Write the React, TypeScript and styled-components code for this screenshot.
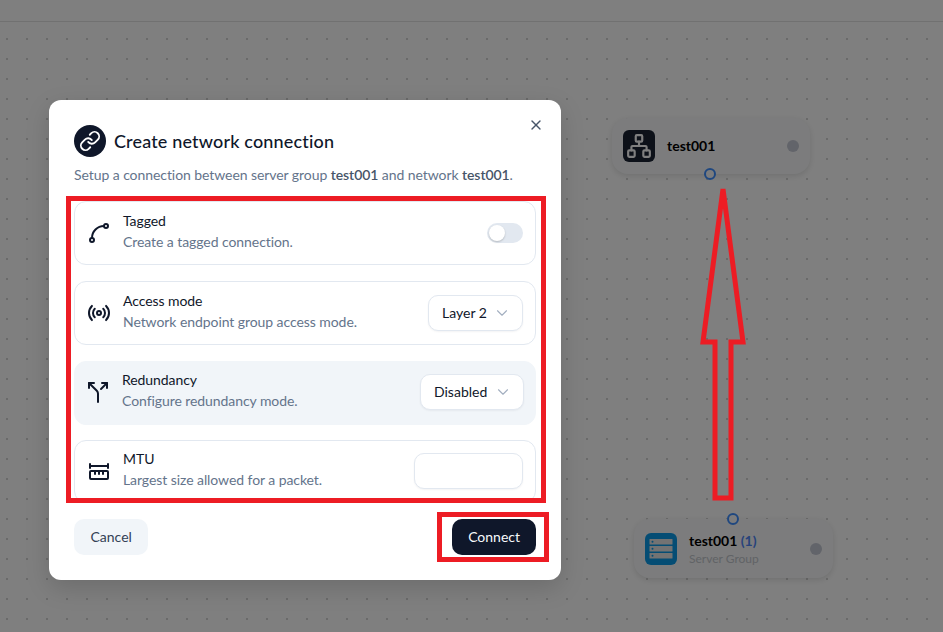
import React from "react";
import styled, { createGlobalStyle } from "styled-components";
import { ChevronDown, Link, Network, Radio, Split, Spline, X } from "lucide-react";

const GlobalStyle = createGlobalStyle`
    html, body {
        margin: 0;
        padding: 0;
        background: #fff;
    }
    * {
        box-sizing: border-box;
    }
`

const Page = styled.div`
    position: relative;
    width: 943px;
    height: 632px;
    overflow: hidden;
    font-family: "Lato", "Liberation Sans", sans-serif;
    color: #0f172a;
    background-color: #ffffff;
`
const TopBar = styled.div`
    height: 22px;
    background-color: #ffffff;
    border-bottom: 1px solid #e2e2e2;
`
const Canvas = styled.div`
    height: 610px;
    background-image: radial-gradient(circle, #d4d4d4 0.8px, transparent 1px);
    background-size: 20px 20px;
    background-position: -3px 7px;
`
const Node = styled.div<{ $x: number; $y: number; $w: number; $h: number }>`
    position: absolute;
    left: ${props => props.$x}px;
    top: ${props => props.$y}px;
    width: ${props => props.$w}px;
    height: ${props => props.$h}px;
    display: flex;
    align-items: center;
    gap: 12px;
    padding: 0 11px;
    background-color: #f8f9fa;
    border-radius: 16px;
    box-shadow: 0 2px 6px rgba(0, 0, 0, 0.12);
`
const NodeIcon = styled.div<{ $bg: string }>`
    width: 32px;
    height: 32px;
    flex: none;
    display: flex;
    align-items: center;
    justify-content: center;
    border-radius: 6px;
    color: #ffffff;
    background-color: ${props => props.$bg};
`
const NodeText = styled.div<{ $top?: number }>`
    flex: 1;
    min-width: 0;
    padding-top: ${props => props.$top || 0}px;
`
const NodeName = styled.div`
    font-size: 14px;
    font-weight: 700;
    line-height: 18px;
    color: #000000;
`
const NodeCount = styled.span`
    color: #4f86f7;
`
const NodeType = styled.div`
    font-size: 12px;
    line-height: 18px;
    color: #c2c6cc;
`
const StatusDot = styled.div`
    width: 12px;
    height: 12px;
    flex: none;
    border-radius: 50%;
    background-color: #c4c8d4;
`
const Handle = styled.div<{ $x: number; $y: number }>`
    position: absolute;
    left: ${props => props.$x}px;
    top: ${props => props.$y}px;
    width: 12px;
    height: 12px;
    border: 2px solid #3f8fff;
    border-radius: 50%;
    background-color: #f8f9fa;
`
const Scrim = styled.div`
    position: absolute;
    inset: 0;
    background-color: rgba(0, 0, 0, 0.5);
`
const Modal = styled.div`
    position: absolute;
    left: 49px;
    top: 100px;
    width: 512px;
    height: 480px;
    display: flex;
    flex-direction: column;
    padding: 25px 25px 25px;
    background-color: #ffffff;
    border-radius: 12px;
    box-shadow: 0 8px 24px rgba(0, 0, 0, 0.15);
`
const CloseButton = styled.div`
    position: absolute;
    top: 17px;
    right: 17px;
    display: flex;
    color: #475569;
`
const Header = styled.div`
    display: flex;
    align-items: center;
    gap: 8px;
    height: 32px;
`
const HeaderIcon = styled.div`
    width: 32px;
    height: 32px;
    display: flex;
    align-items: center;
    justify-content: center;
    border-radius: 50%;
    color: #ffffff;
    background-color: #0f172a;
`
const Title = styled.h2`
    margin: 0;
    font-size: 18px;
    font-weight: 500;
    letter-spacing: 0.16px;
    color: #0f172a;
`
const Description = styled.p`
    margin: 9px 0 0;
    font-size: 14px;
    line-height: 18px;
    letter-spacing: -0.07px;
    color: #64748b;
`
const Strong = styled.span`
    font-weight: 600;
    color: #475569;
`
const List = styled.div`
    height: 297px;
    margin-top: 17px;
    display: flex;
    flex-direction: column;
    gap: 16.5px;
    overflow: hidden;
`
const Row = styled.div<{ $active?: boolean }>`
    height: 63.5px;
    flex: none;
    display: flex;
    align-items: center;
    padding: ${props => (props.$active ? "0 11px 2px" : "0 12px")};
    gap: 12px;
    margin-bottom: ${props => (props.$active ? "-1.5px" : "0")};
    border-radius: 12px;
    border: 1px solid ${props => (props.$active ? "#f1f5f9" : "#e2e8f0")};
    background-color: ${props => (props.$active ? "#f1f5f9" : "#ffffff")};
`
const RowIcon = styled.div`
    width: 24px;
    height: 24px;
    flex: none;
    display: flex;
    color: #0f172a;
`
const RowText = styled.div<{ $lift: number }>`
    flex: 1;
    min-width: 0;
    padding-bottom: ${props => props.$lift}px;
`
const RowTitle = styled.div`
    font-size: 14px;
    line-height: 21px;
    letter-spacing: -0.07px;
    color: #0f172a;
`
const RowHint = styled.div`
    font-size: 14px;
    line-height: 21px;
    letter-spacing: -0.07px;
    color: #64748b;
`
const Toggle = styled.div`
    width: 36px;
    height: 20px;
    padding: 2px;
    border-radius: 10px;
    background-color: #e2e8f0;
`
const ToggleKnob = styled.div`
    width: 16px;
    height: 16px;
    border-radius: 50%;
    background-color: #ffffff;
    box-shadow: 0 1px 2px rgba(0, 0, 0, 0.2);
`
const Select = styled.div<{ $w: number }>`
    width: ${props => props.$w}px;
    height: 36px;
    display: flex;
    align-items: center;
    justify-content: space-between;
    padding: 0 11px 0 13px;
    font-size: 14px;
    color: #0f172a;
    background-color: #ffffff;
    border: 1px solid #e2e8f0;
    border-radius: 10px;
    box-shadow: 0 1px 2px rgba(15, 23, 42, 0.05);
    svg {
        color: #a3afc0;
    }
`
const NumberInput = styled.div`
    width: 109px;
    height: 36px;
    background-color: #ffffff;
    border: 1px solid #e2e8f0;
    border-radius: 10px;
    box-shadow: 0 1px 2px rgba(15, 23, 42, 0.05);
`
const Footer = styled.div`
    margin-top: auto;
    display: flex;
    align-items: center;
    justify-content: space-between;
`
const Button = styled.div<{ $primary?: boolean }>`
    height: 36px;
    display: flex;
    align-items: center;
    padding: ${props => (props.$primary ? "0 16px 1px" : "0 16.5px 1px")};
    font-size: 14px;
    border-radius: 10px;
    color: ${props => (props.$primary ? "#f8fafc" : "#334155")};
    background-color: ${props => (props.$primary ? "#0f172a" : "#f1f5f9")};
`
const Annotation = styled.div<{ $x: number; $y: number; $w: number; $h: number }>`
    position: absolute;
    left: ${props => props.$x}px;
    top: ${props => props.$y}px;
    width: ${props => props.$w}px;
    height: ${props => props.$h}px;
    border: 5px solid #ed1c24;
`
const ArrowSvg = styled.svg`
    position: absolute;
    left: 695px;
    top: 180px;
`

const RulerIcon = () => (
    <svg width="24" height="24" viewBox="0 0 24 24" fill="none" stroke="currentColor" strokeWidth="2" strokeLinecap="round" strokeLinejoin="round">
        <path d="M3 5v4" />
        <path d="M21 5v4" />
        <path d="M3 7h18" />
        <rect x="3" y="12" width="18" height="8" rx="1" />
        <path d="M8 12v3" />
        <path d="M12 12v3" />
        <path d="M16 12v3" />
    </svg>
)

const ServerIcon = () => (
    <svg width="26" height="26" viewBox="0 0 26 26" fill="#e6e6e6">
        <rect x="1.5" y="3" width="23" height="5.5" rx="0.5" />
        <rect x="1.5" y="10" width="23" height="5.5" rx="0.5" />
        <rect x="1.5" y="17" width="23" height="5.5" rx="0.5" />
        <circle cx="4.5" cy="5.7" r="1" fill="#0a9ae8" />
        <circle cx="4.5" cy="12.7" r="1" fill="#0a9ae8" />
        <circle cx="4.5" cy="19.7" r="1" fill="#0a9ae8" />
    </svg>
)

export default function App() {
    return (
        <Page>
            <GlobalStyle />
            <TopBar />
            <Canvas />
            <Node $x={612} $y={118} $w={198} $h={56}>
                <NodeIcon $bg="#1a2233"><Network size={26} strokeWidth={2} /></NodeIcon>
                <NodeText><NodeName>test001</NodeName></NodeText>
                <StatusDot />
            </Node>
            <Handle $x={704} $y={168} />
            <Node $x={634} $y={519} $w={199} $h={59}>
                <NodeIcon $bg="#0a9ae8"><ServerIcon /></NodeIcon>
                <NodeText $top={2}>
                    <NodeName>test001 <NodeCount>(1)</NodeCount></NodeName>
                    <NodeType>Server Group</NodeType>
                </NodeText>
                <StatusDot />
            </Node>
            <Handle $x={727} $y={513} />
            <Scrim />
            <Modal>
                <CloseButton><X size={16} /></CloseButton>
                <Header>
                    <HeaderIcon><Link size={22} /></HeaderIcon>
                    <Title>Create network connection</Title>
                </Header>
                <Description>
                    Setup a connection between server group <Strong>test001</Strong> and network <Strong>test001</Strong>.
                </Description>
                <List>
                    <Row>
                        <RowIcon><Spline size={24} /></RowIcon>
                        <RowText $lift={3}>
                            <RowTitle>Tagged</RowTitle>
                            <RowHint>Create a tagged connection.</RowHint>
                        </RowText>
                        <Toggle><ToggleKnob /></Toggle>
                    </Row>
                    <Row>
                        <RowIcon><Radio size={24} /></RowIcon>
                        <RowText $lift={3}>
                            <RowTitle>Access mode</RowTitle>
                            <RowHint>Network endpoint group access mode.</RowHint>
                        </RowText>
                        <Select $w={95}>Layer 2 <ChevronDown size={18} strokeWidth={1.5} /></Select>
                    </Row>
                    <Row $active>
                        <RowIcon><Split size={24} /></RowIcon>
                        <RowText $lift={4}>
                            <RowTitle>Redundancy</RowTitle>
                            <RowHint>Configure redundancy mode.</RowHint>
                        </RowText>
                        <Select $w={104}>Disabled <ChevronDown size={18} strokeWidth={1.5} /></Select>
                    </Row>
                    <Row>
                        <RowIcon><RulerIcon /></RowIcon>
                        <RowText $lift={5}>
                            <RowTitle>MTU</RowTitle>
                            <RowHint>Largest size allowed for a packet.</RowHint>
                        </RowText>
                        <NumberInput />
                    </Row>
                </List>
                <Footer>
                    <Button>Cancel</Button>
                    <Button $primary>Connect</Button>
                </Footer>
            </Modal>
            <Annotation $x={66} $y={196} $w={480} $h={307} />
            <Annotation $x={437} $y={512} $w={112} $h={50} />
            <ArrowSvg width="56" height="325" viewBox="0 0 56 325" fill="none" stroke="#ed1c24" strokeWidth="5">
                <path d="M28 9 L8 162 L20 162 L20 318 L36 318 L36 162 L48 162 Z" />
            </ArrowSvg>
        </Page>
    )
}
